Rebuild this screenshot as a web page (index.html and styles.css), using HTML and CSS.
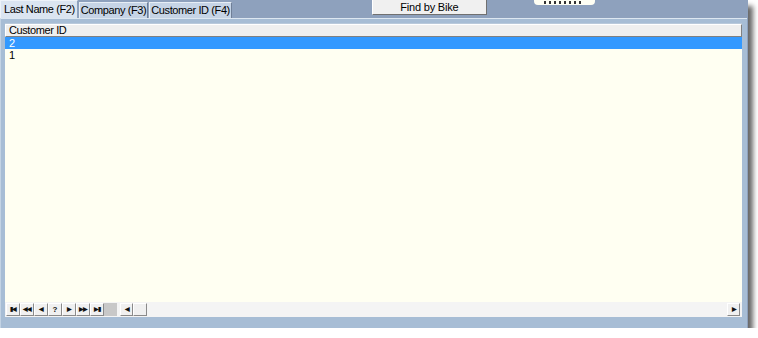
FILE: index.html
```html
<!DOCTYPE html>
<html lang="en">
<head>
    <meta charset="UTF-8">
    <title>Customer Lookup</title>
    <link rel="stylesheet" href="styles.css">
</head>
<body>
    <div class="window">
        <div class="top-bar">
            <div class="tabs">
                <div class="tab active">Last Name (F2)</div>
                <div class="tab">Company (F3)</div>
                <div class="tab">Customer ID (F4)</div>
            </div>
            <button class="btn-find">Find by Bike</button>
            <div class="pill"><span class="pill-dots"></span></div>
        </div>

        <div class="panel">
            <div class="grid">
                <div class="grid-header">Customer ID</div>
                <div class="grid-rows">
                    <div class="row selected">2</div>
                    <div class="row">1</div>
                </div>
                <div class="nav-bar">
                    <div class="nav-buttons">
                        <span class="nav-btn">▮◀</span>
                        <span class="nav-btn">◀◀</span>
                        <span class="nav-btn">◀</span>
                        <span class="nav-btn q">?</span>
                        <span class="nav-btn">▶</span>
                        <span class="nav-btn">▶▶</span>
                        <span class="nav-btn">▶▮</span>
                    </div>
                    <div class="nav-gap"></div>
                    <span class="scroll-btn">◀</span>
                    <span class="scroll-thumb"></span>
                    <div class="scroll-track"></div>
                    <span class="scroll-btn">▶</span>
                </div>
            </div>
        </div>
    </div>
</body>
</html>
```

FILE: styles.css
```css
* {
    margin: 0;
    padding: 0;
    box-sizing: border-box;
}

body {
    background: #ffffff;
    font-family: 'Liberation Sans', Arial, sans-serif;
    font-size: 11px;
    letter-spacing: -0.4px;
    color: #000;
}

.window {
    width: 748px;
    height: 328px;
    background: #8ea1bd;
    display: flex;
    flex-direction: column;
    box-shadow: 5px 6px 5px rgba(0, 0, 0, 0.6);
}

.top-bar {
    height: 18px;
    display: flex;
    align-items: flex-start;
}

.tabs {
    display: flex;
    align-items: flex-end;
    height: 18px;
}

.tab {
    height: 16px;
    margin-left: 1px;
    padding: 0 1px 0 1px;
    line-height: 15px;
    background: #c6d4e6;
    border: 1px solid #e7eef6;
    border-bottom: none;
    border-right-color: #6f7f97;
}

.tab.active {
    height: 18px;
    margin-left: 0;
    padding: 0 2px 0 3px;
    line-height: 17px;
    background: #dbe5f1;
    border-color: #eef3f9;
    border-right-color: #8ea1bd;
}

.btn-find {
    margin-left: 140px;
    width: 115px;
    height: 15px;
    font-family: 'Liberation Sans', Arial, sans-serif;
    font-size: 11px;
    letter-spacing: -0.2px;
    background: #f0f0f0;
    border: 1px solid #ffffff;
    border-right-color: #707070;
    border-bottom-color: #707070;
    border-top: none;
    line-height: 12px;
}

.pill {
    margin-left: 47px;
    width: 61px;
    height: 5px;
    background: #fffff4;
    border-radius: 0 0 4px 4px;
    display: flex;
    justify-content: center;
}

.pill-dots {
    width: 40px;
    height: 3px;
    margin-top: 1px;
    background: repeating-linear-gradient(to right, #333 0 2px, transparent 2px 5px);
}

.panel {
    flex: 1;
    background: #a7bdd5;
    border-top: 1px solid #dde7f1;
    border-left: 1px solid #c3d3e4;
    margin-right: 1px;
    padding: 4px 5px 11px 4px;
    display: flex;
}

.grid {
    flex: 1;
    background: #fffff2;
    border-top: 1px solid #b9c9db;
    display: flex;
    flex-direction: column;
}

.grid-header {
    height: 13px;
    line-height: 11px;
    padding-left: 3px;
    background: #efefef;
    border: 1px solid #808080;
    border-top-color: #ffffff;
    border-left-color: #ffffff;
}

.grid-rows {
    flex: 1;
}

.row {
    height: 12px;
    line-height: 12px;
    padding-left: 4px;
}

.row.selected {
    background: #3399ff;
    color: #ffffff;
}

.nav-bar {
    height: 15px;
    background: #f4f4f4;
    display: flex;
    align-items: center;
    padding-left: 1px;
    padding-right: 2px;
}

.nav-buttons {
    display: flex;
}

.nav-btn,
.scroll-btn {
    width: 14px;
    height: 13px;
    background: #f0f0f0;
    border: 1px solid #ffffff;
    border-right-color: #8a8a8a;
    border-bottom-color: #8a8a8a;
    font-size: 6px;
    font-weight: bold;
    line-height: 11px;
    text-align: center;
    color: #111;
    letter-spacing: -1px;
    overflow: hidden;
}

.nav-btn.q {
    font-size: 8px;
    letter-spacing: 0;
}

.nav-gap {
    width: 13px;
    height: 13px;
    background: #c8c8c8;
    margin-right: 3px;
}

.scroll-btn {
    width: 13px;
}

.scroll-thumb {
    width: 14px;
    height: 13px;
    background: #f0f0f0;
    border: 1px solid #ffffff;
    border-right-color: #8a8a8a;
    border-bottom-color: #8a8a8a;
}

.scroll-track {
    flex: 1;
    height: 13px;
    background: #f4f4f4;
}
```
